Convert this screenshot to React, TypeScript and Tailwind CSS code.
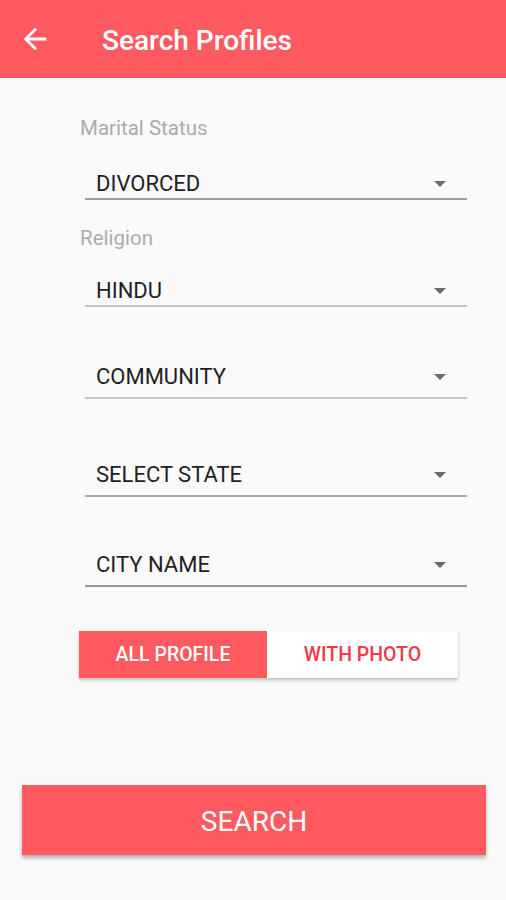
import React from "react";

function Caret() {
  return (
    <svg width="12" height="6" viewBox="0 0 12 6" className="shrink-0">
      <path d="M0 0 L12 0 L6 6 Z" fill="#6b6b6b" />
    </svg>
  );
}

function Dropdown({ text, mt, pb, line }: { text: string; mt: string; pb: string; line: string }) {
  return (
    <div className={`${mt} ${pb} ${line} ml-[85px] w-[382px] border-b-2 flex items-center pl-[11px] pr-[21px]`}>
      <span className="flex-1 text-[22px] leading-[28px] text-[#1f1f1f]">{text}</span>
      <Caret />
    </div>
  );
}

export default function App() {
  return (
    <div className="w-[506px] h-[900px] bg-[#fafafa] overflow-hidden" style={{ fontFamily: "Roboto, 'Liberation Sans', sans-serif" }}>
      <div className="h-[78px] bg-[#ff5a5f] flex items-center">
        <svg width="34" height="34" viewBox="0 0 24 24" className="ml-[18px]">
          <path d="M20 11H7.83l5.59-5.59L12 4l-8 8 8 8 1.41-1.41L7.83 13H20v-2z" fill="#ffffff" />
        </svg>
        <span className="ml-[50px] mt-[3px] text-[28px] font-medium text-white leading-none">Search Profiles</span>
      </div>

      <div className="mt-[38px] ml-[80px] text-[20.5px] leading-[24px] text-[#ababab]">Marital Status</div>
      <Dropdown text="DIVORCED" mt="mt-[30px]" pb="pb-0" line="border-[#9e9e9e]" />

      <div className="mt-[26px] ml-[80px] text-[20.5px] leading-[24px] text-[#ababab]">Religion</div>
      <Dropdown text="HINDU" mt="mt-[27px]" pb="pb-0" line="border-[#c2c2c2]" />

      <Dropdown text="COMMUNITY" mt="mt-[56px]" pb="pb-[6px]" line="border-[#c6c6c6]" />
      <Dropdown text="SELECT STATE" mt="mt-[62px]" pb="pb-[6px]" line="border-[#a8a8a8]" />
      <Dropdown text="CITY NAME" mt="mt-[54px]" pb="pb-[6px]" line="border-[#969696]" />

      <div className="mt-[44px] ml-[79px] w-[379px] h-[47px] flex shadow-[0_2px_3px_rgba(0,0,0,0.25)]">
        <div className="w-[188px] bg-[#ff5a5f] flex items-center justify-center text-white text-[19.5px] font-medium">ALL PROFILE</div>
        <div className="flex-1 bg-white flex items-center justify-center text-[#f03a47] text-[19.5px] font-medium">WITH PHOTO</div>
      </div>

      <div className="mt-[107px] ml-[22px] w-[464px] h-[70px] bg-[#ff5a5f] flex items-center justify-center text-white text-[28px] shadow-[0_3px_4px_rgba(0,0,0,0.3)]">
        <span className="mt-[3px]">SEARCH</span>
      </div>
    </div>
  );
}
